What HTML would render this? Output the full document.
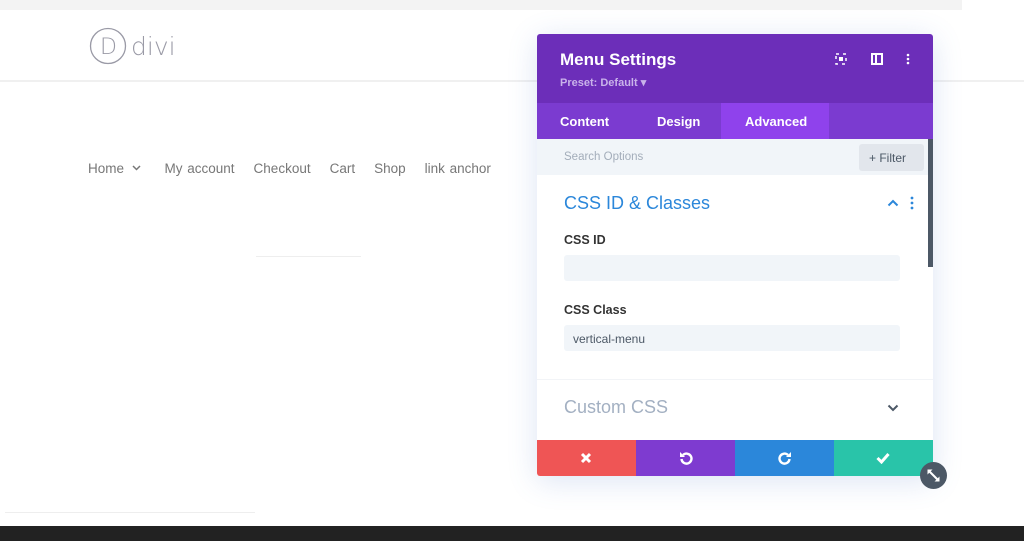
<!DOCTYPE html>
<html><head><style>
*{margin:0;padding:0;box-sizing:border-box}
body{width:1024px;height:541px;overflow:hidden;background:#fff;font-family:"Liberation Sans",sans-serif;position:relative}
.a{position:absolute}
</style></head><body>
<div class="a" style="left:0;top:0;width:962px;height:10px;background:#f3f3f3"></div>
<div class="a" style="left:0;top:80px;width:1024px;height:2px;background:#f0f0f0"></div>
<svg class="a" style="left:89px;top:26px" width="90" height="40"><circle cx="19" cy="20" r="17.5" fill="none" stroke="#9a9aa6" stroke-width="1.3"/><text x="11" y="28" font-size="22" fill="#9a9aa6" font-family="DejaVu Sans" font-weight="200">D</text><text x="42" y="29" font-size="25" fill="#9a9aa6" font-family="DejaVu Sans" font-weight="200">divi</text></svg>
<div class="a" style="left:88px;top:161px;font-size:13.5px;color:#777;white-space:nowrap;word-spacing:1px">Home <svg width="9" height="6" style="margin:0 0 2px 3px"><path d="M1 1l3.5 3.5L8 1" fill="none" stroke="#777" stroke-width="1.5"/></svg>&nbsp;&nbsp;&nbsp;&nbsp;&nbsp;My account&nbsp;&nbsp;&nbsp;&nbsp;Checkout&nbsp;&nbsp;&nbsp;&nbsp;Cart&nbsp;&nbsp;&nbsp;&nbsp;Shop&nbsp;&nbsp;&nbsp;&nbsp;link anchor</div>
<div class="a" style="left:256px;top:256px;width:105px;height:1px;background:#eee"></div>
<div class="a" style="left:5px;top:512px;width:250px;height:1px;background:#eee"></div>
<div class="a" style="left:0;top:526px;width:1024px;height:15px;background:#222"></div>

<div class="a" style="left:537px;top:34px;width:396px;height:442px;background:#fff;box-shadow:0 5px 30px rgba(80,120,200,.2);border-radius:3px;overflow:hidden">
 <div class="a" style="left:0;top:0;width:396px;height:69px;background:#6c2eb9"></div>
 <div class="a" style="left:23px;top:16px;color:#fff;font-size:17px;font-weight:bold">Menu Settings</div>
 <div class="a" style="left:23px;top:42px;color:#c9b3ea;font-size:11px;font-weight:bold">Preset: Default ▾</div>
 <svg class="a" style="left:298px;top:18px" width="80" height="16"><rect x="1" y="2" width="10" height="10" fill="none" stroke="#fff" stroke-width="1.5" stroke-dasharray="3 4"/><rect x="4" y="5" width="4" height="4" fill="#fff"/><rect x="37" y="2" width="10" height="10" fill="none" stroke="#fff" stroke-width="2"/><rect x="40" y="2" width="2" height="10" fill="#fff"/><circle cx="73" cy="3" r="1.3" fill="#fff"/><circle cx="73" cy="7" r="1.3" fill="#fff"/><circle cx="73" cy="11" r="1.3" fill="#fff"/></svg>
 <div class="a" style="left:0;top:69px;width:396px;height:36px;background:#7b3bd0"></div>
 <div class="a" style="left:184px;top:69px;width:108px;height:36px;background:#8f42ec"></div>
 <div class="a" style="left:23px;top:80px;color:#fff;font-size:13px;font-weight:bold">Content</div>
 <div class="a" style="left:120px;top:80px;color:#fff;font-size:13px;font-weight:bold">Design</div>
 <div class="a" style="left:208px;top:80px;color:#fff;font-size:13px;font-weight:bold">Advanced</div>
 <div class="a" style="left:0;top:105px;width:396px;height:36px;background:#f1f5f9"></div>
 <div class="a" style="left:27px;top:117px;color:#a3adba;font-size:11.5px">Search Options</div>
 <div class="a" style="left:322px;top:110px;width:65px;height:27px;background:#e2e6ec;border-radius:3px;color:#4c5866;font-size:12px;padding:7px 0 0 10px">+ Filter</div>
 <div class="a" style="left:391px;top:105px;width:5px;height:128px;background:#4c5866"></div>
 <div class="a" style="left:27px;top:159px;color:#2b87da;font-size:18px">CSS ID &amp; Classes</div>
 <svg class="a" style="left:350px;top:165px" width="12" height="8"><path d="M1.5 6.5L6 2l4.5 4.5" fill="none" stroke="#2b87da" stroke-width="2"/></svg>
 <svg class="a" style="left:373px;top:162px" width="4" height="14"><circle cx="2" cy="2" r="1.4" fill="#2b87da"/><circle cx="2" cy="7" r="1.4" fill="#2b87da"/><circle cx="2" cy="12" r="1.4" fill="#2b87da"/></svg>
 <div class="a" style="left:27px;top:199px;color:#333;font-size:12.5px;font-weight:bold">CSS ID</div>
 <div class="a" style="left:27px;top:221px;width:336px;height:26px;background:#f1f5f9;border-radius:3px"></div>
 <div class="a" style="left:27px;top:269px;color:#333;font-size:12.5px;font-weight:bold">CSS Class</div>
 <div class="a" style="left:27px;top:291px;width:336px;height:26px;background:#f1f5f9;border-radius:3px;color:#4c5866;font-size:12px;padding:7px 0 0 9px">vertical-menu</div>
 <div class="a" style="left:0;top:345px;width:396px;height:1px;background:#f2f4f7"></div>
 <div class="a" style="left:27px;top:363px;color:#a3b0c2;font-size:18px">Custom CSS</div>
 <svg class="a" style="left:350px;top:370px" width="12" height="8"><path d="M1.5 1.5L6 6l4.5-4.5" fill="none" stroke="#4c5866" stroke-width="2"/></svg>
 <div class="a" style="left:0;top:406px;width:99px;height:36px;background:#ef5555"><svg style="margin:12px 0 0 43px" width="12" height="12"><path d="M2 2l8 8M10 2l-8 8" stroke="#fff" stroke-width="3"/></svg></div>
 <div class="a" style="left:99px;top:406px;width:99px;height:36px;background:#7e3bd0"><svg style="margin:11px 0 0 43px" width="14" height="14"><path d="M4 4A5 5 0 1 1 2.5 8" fill="none" stroke="#fff" stroke-width="2.4"/><path d="M1 1v5h5z" fill="#fff"/></svg></div>
 <div class="a" style="left:198px;top:406px;width:99px;height:36px;background:#2b87da"><svg style="margin:11px 0 0 43px" width="14" height="14"><path d="M10 4A5 5 0 1 0 11.5 8" fill="none" stroke="#fff" stroke-width="2.4"/><path d="M13 1v5H8z" fill="#fff"/></svg></div>
 <div class="a" style="left:297px;top:406px;width:99px;height:36px;background:#29c4a9"><svg style="margin:12px 0 0 42px" width="14" height="12"><path d="M1.5 6l4 4L12.5 2" fill="none" stroke="#fff" stroke-width="3"/></svg></div>
</div>
<div class="a" style="left:920px;top:462px;width:27px;height:27px;border-radius:50%;background:#4c5866"><svg width="27" height="27"><path d="M9 9l9 9" stroke="#fff" stroke-width="2"/><path d="M7.5 7.5h5l-5 5zM19.5 19.5h-5l5-5z" fill="#fff"/></svg></div>
</body></html>
